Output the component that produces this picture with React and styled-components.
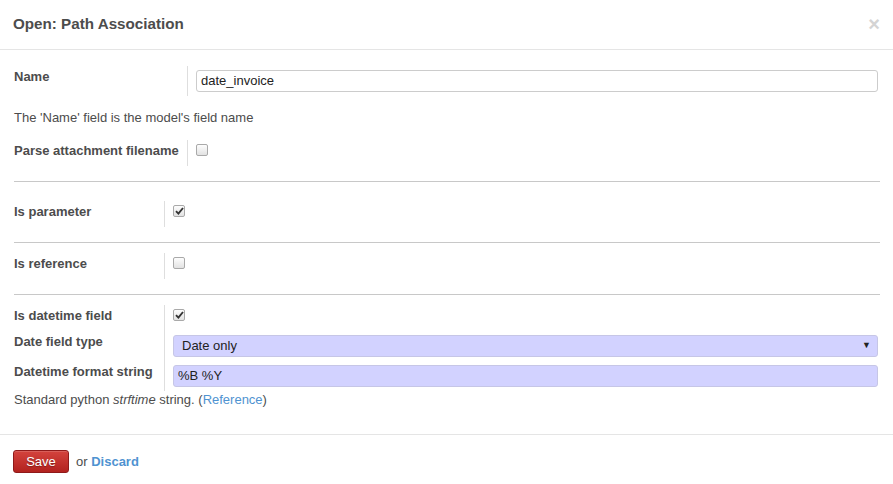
import React from "react";
import styled, { createGlobalStyle } from "styled-components";

const Global = createGlobalStyle`
  html, body { margin: 0; padding: 0; background: #fff; }
  body { font-family: "Liberation Sans", Arial, sans-serif; font-size: 13px; color: #4c4c4c; }
`;

const Dialog = styled.div`
  width: 893px;
  height: 484px;
  background: #fff;
  display: flex;
  flex-direction: column;
  overflow: hidden;
`;

const Header = styled.div`
  flex: none;
  height: 50px;
  border-bottom: 1px solid #e5e5e5;
  display: flex;
  align-items: center;
  justify-content: space-between;
  padding: 0 13px 1px;
  box-sizing: border-box;
`;

const Title = styled.h3`
  margin: 0;
  font-size: 15.2px;
  font-weight: bold;
  color: #4c4c4c;
  line-height: 20px;
`;

const Close = styled.span`
  font-size: 20px;
  font-weight: bold;
  color: #d4d4d4;
  line-height: 20px;
  margin-right: 0;
`;

const Body = styled.div`
  flex: none;
  padding: 16px 13px 0 14px;
  height: 385px;
  box-sizing: border-box;
  border-bottom: 1px solid #e5e5e5;
`;

const Group = styled.div`
  display: grid;
  grid-template-columns: ${(p) => p.$labelW}px 1fr;
  margin-top: ${(p) => p.$mt || 0}px;
`;

const Label = styled.div`
  font-weight: bold;
  line-height: 16px;
  padding-top: 3px;
`;

const Cell = styled.div`
  border-left: 1px solid #dedede;
  padding: 4px 2px ${(p) => (p.$check ? 10 : 4)}px 8px;
  display: flex;
  align-items: flex-start;
`;

const TextInput = styled.div`
  flex: 1;
  height: 22px;
  box-sizing: border-box;
  border: 1px solid ${(p) => (p.$required ? "#c6c6e6" : "#ccc")};
  border-radius: 3px;
  background: ${(p) => (p.$required ? "#d2d2ff" : "#fff")};
  padding: 0 4px;
  line-height: 20px;
  color: #222;
  font-size: 13px;
`;

const Select = styled.div`
  flex: 1;
  height: 22px;
  box-sizing: border-box;
  border: 1px solid #c6c6e6;
  border-radius: 3px;
  background: #d2d2ff;
  padding: 0 8px;
  line-height: 22px;
  color: #222;
  font-size: 13px;
  display: flex;
  justify-content: space-between;
  align-items: center;
`;

const Caret = styled.span`
  font-size: 9px;
  color: #222;
  margin-right: -2px;
  margin-top: -3px;
`;

const Box = styled.span`
  width: 12px;
  height: 12px;
  box-sizing: border-box;
  border: 1px solid #a9a9a9;
  border-radius: 2px;
  background: linear-gradient(#fdfdfd, #e2e2e2);
  display: flex;
  align-items: center;
  justify-content: center;
`;

const Help = styled.div`
  line-height: 16px;
  margin-top: ${(p) => p.$mt || 0}px;
`;

const Rule = styled.div`
  height: 1px;
  background: #c8c8c8;
  margin: ${(p) => p.$mt}px 0 ${(p) => p.$mb}px;
`;

const Link = styled.a`
  color: #4f93d1;
  text-decoration: none;
  font-weight: ${(p) => (p.$bold ? "bold" : "normal")};
`;

const Footer = styled.div`
  flex: none;
  padding: 15px 13px;
  display: flex;
  align-items: center;
  gap: 7px;
`;

const SaveButton = styled.button`
  width: 56px;
  height: 23px;
  border: 1px solid #8f1a1a;
  border-radius: 3px;
  background: linear-gradient(#d4433d, #b2221f);
  color: #fff;
  font-family: "Liberation Sans", Arial, sans-serif;
  font-size: 13px;
  padding: 0;
  text-shadow: 0 1px 1px rgba(0,0,0,0.3);
  box-shadow: inset 0 1px 0 rgba(255,255,255,0.15);
`;

const Check = ({ checked }) => (
  <Box>
    {checked && (
      <svg width="9" height="8" viewBox="0 0 9 8">
        <path d="M1 4.2 L3.4 6.6 L8 1" fill="none" stroke="#333" strokeWidth="1.9" />
      </svg>
    )}
  </Box>
);

export default function App() {
  return (
    <>
      <Global />
      <Dialog>
        <Header>
          <Title>Open: Path Association</Title>
          <Close>×</Close>
        </Header>
        <Body>
          <Group $labelW={173}>
            <Label>Name</Label>
            <Cell>
              <TextInput>date_invoice</TextInput>
            </Cell>
          </Group>
          <Help $mt={14}>The 'Name' field is the model's field name</Help>
          <Group $labelW={173} $mt={14}>
            <Label>Parse attachment filename</Label>
            <Cell $check>
              <Check />
            </Cell>
          </Group>
          <Rule $mt={15} $mb={19} />
          <Group $labelW={150}>
            <Label>Is parameter</Label>
            <Cell $check>
              <Check checked />
            </Cell>
          </Group>
          <Rule $mt={15} $mb={10} />
          <Group $labelW={150}>
            <Label>Is reference</Label>
            <Cell $check>
              <Check />
            </Cell>
          </Group>
          <Rule $mt={15} $mb={10} />
          <Group $labelW={150}>
            <Label>Is datetime field</Label>
            <Cell $check>
              <Check checked />
            </Cell>
            <Label>Date field type</Label>
            <Cell>
              <Select>
                <span>Date only</span>
                <Caret>▼</Caret>
              </Select>
            </Cell>
            <Label>Datetime format string</Label>
            <Cell>
              <TextInput $required>%B %Y</TextInput>
            </Cell>
          </Group>
          <Help $mt={1}>
            Standard python <i>strftime</i> string. (<Link>Reference</Link>)
          </Help>
        </Body>
        <Footer>
          <SaveButton>Save</SaveButton>
          <span>
            or <Link $bold>Discard</Link>
          </span>
        </Footer>
      </Dialog>
    </>
  );
}
